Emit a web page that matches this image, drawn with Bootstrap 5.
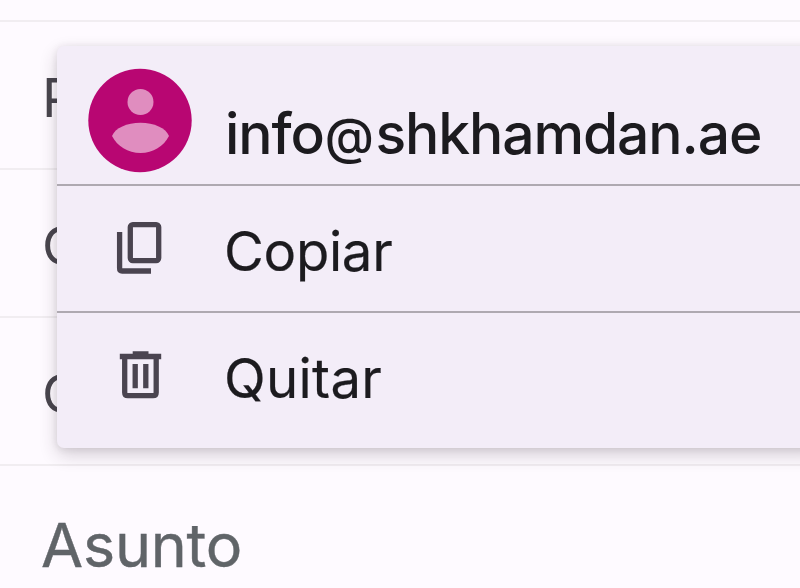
<!DOCTYPE html>
<html lang="es">
<head>
<meta charset="utf-8">
<meta name="viewport" content="width=device-width, initial-scale=1">
<title>Redactar</title>
<link href="https://cdn.jsdelivr.net/npm/bootstrap@5.3.0/dist/css/bootstrap.min.css" rel="stylesheet">
<style>
body{background:#fefaff;font-family:Inter,Roboto,sans-serif;height:588px}
.compose{height:588px;padding-top:20px}
.field{height:148px;border-top:2px solid #f1edf1;padding-left:42px;font-size:54px;line-height:64px;color:#48454d;flex:none}
.field span{display:block;height:64px;margin-top:44px}
.field.subject{color:#606468;font-size:61px;-webkit-text-stroke:.4px #606468}
.field.subject span{margin-top:47px;margin-left:-1px;letter-spacing:-.2px}
.chip-menu{left:57px;top:46px;width:763px;height:402px;background:#f3edf8;border-radius:7px;box-shadow:0 7px 18px rgba(50,35,50,.2),0 1px 7px rgba(50,35,50,.1);color:#1c1b1f}
.entry{border-bottom:2px solid #aea9b1;line-height:64px;font-size:54.5px;white-space:nowrap}
.entry:last-child{border-bottom:0}
.entry.who{height:140px;font-weight:500;font-size:57px}
.entry.copy{height:127px}
.entry.remove{height:135px}
.slot{width:168px;flex:none}
.slot svg{display:block}
.txt-who{padding-top:56px;letter-spacing:-1.1px}
.txt-who i{font-style:normal;font-size:50px;letter-spacing:.5px;margin:0 1px}
.txt-copy{padding-top:33px;margin-left:-1px;letter-spacing:-.3px;-webkit-text-stroke:.2px #1c1b1f}
.txt-remove{padding-top:33px;margin-left:-1px;letter-spacing:.3px;-webkit-text-stroke:.2px #1c1b1f}
</style>
</head>
<body class="m-0 overflow-hidden">
<main class="compose position-relative overflow-hidden d-flex flex-column">
  <div class="field"><span>Para</span></div>
  <div class="field"><span>Cc</span></div>
  <div class="field"><span>Cco</span></div>
  <div class="field subject"><span>Asunto</span></div>
  <div class="chip-menu position-absolute d-flex flex-column">
    <div class="entry who d-flex">
      <div class="slot"><svg width="168" height="138" viewBox="57 46 168 138"><circle cx="140" cy="120.500" r="51.700" fill="#b80672"/><g fill="#e08dbf"><circle cx="140.500" cy="102" r="13"/><path d="M112 136C115 128 127 122.700 140.500 122.700S166 128 169 136C164 146 153 153 140.500 153S117 146 112 136Z"/></g></svg></div>
      <span class="txt-who">info<i>@</i>shkhamdan.ae</span>
    </div>
    <div class="entry copy d-flex">
      <div class="slot"><svg width="168" height="125" viewBox="57 186 168 125" fill="none" stroke="#4a4450" stroke-width="5.300"><rect x="130.300" y="224.600" width="28.400" height="36" rx="2.500"/><path d="M119.600 232V268.500Q119.600 271 122.100 271H151"/></svg></div>
      <span class="txt-copy">Copiar</span>
    </div>
    <div class="entry remove d-flex">
      <div class="slot"><svg width="168" height="135" viewBox="57 313 168 135" fill="none" stroke="#4a4450" stroke-width="5.300"><path d="M124.700 357V392.500Q124.700 395.700 127.900 395.700H153Q156.200 395.700 156.200 392.500V357M119.800 356.500H161.200M132.700 354H148.500M135.200 364V388.300M145.800 364V388.300"/></svg></div>
      <span class="txt-remove">Quitar</span>
    </div>
  </div>
</main>
<script src="https://cdn.jsdelivr.net/npm/bootstrap@5.3.0/dist/js/bootstrap.bundle.min.js"></script>
</body>
</html>
